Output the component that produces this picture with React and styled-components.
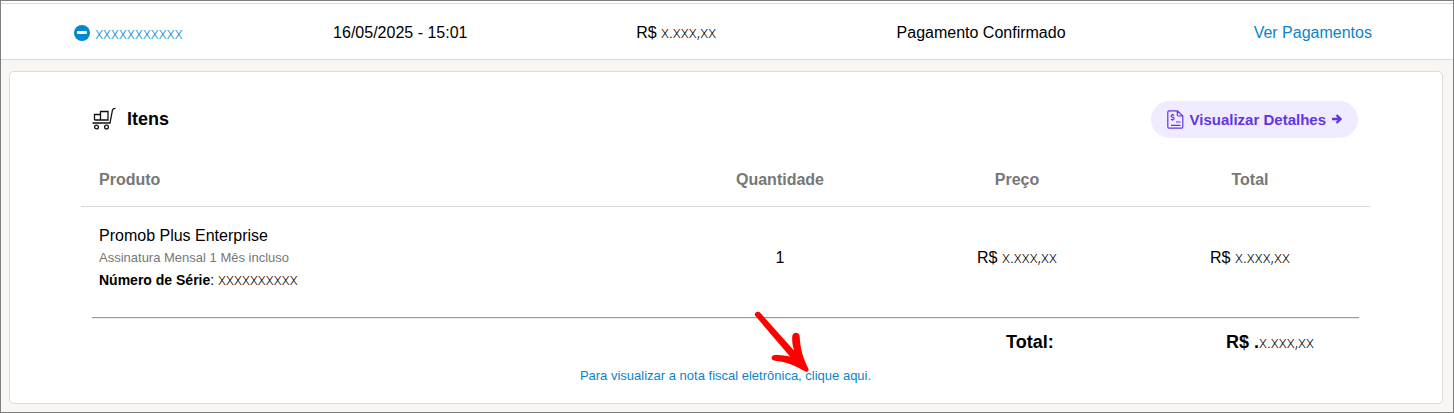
import React from "react";
import styled, { createGlobalStyle } from "styled-components";

const GlobalStyle = createGlobalStyle`
  *, *::before, *::after { box-sizing: border-box; }
  body {
    margin: 0;
    background: #f9f5f2;
    color: #000;
    font-family: "Liberation Sans", Arial, sans-serif;
    font-size: 16px;
    line-height: 22px;
  }
`;

const Page = styled.main`
  border: 1px solid #7f7f7f;
  padding-bottom: 8px;
`;

const OrderTable = styled.table`
  width: 100%;
  margin-bottom: 11px;
  table-layout: fixed;
  border-collapse: collapse;
  background: #fff;
`;

const OrderRow = styled.tr`
  border-bottom: 1px solid #dadada;
`;

const OrderSpacer = styled.div`
  height: 3px;
  background: #fff;
  border-bottom: 1px solid #dadada;
`;

const OrderCell = styled.td`
  width: ${(p) => p.$width};
  height: 55px;
  padding: 4px 0 0 ${(p) => p.$indent || "0"};
  text-align: center;
  white-space: nowrap;
`;

const Link = styled.a`
  color: #0b84cb;
  text-decoration: none;
`;

const OrderLink = styled(Link)`
  display: flex;
  align-items: center;
  justify-content: center;
  gap: 5px;
`;

const Masked = styled.span`
  font-family: "Open Sans", sans-serif;
  font-size: 16px;
  font-weight: 300;
  line-height: 16px;
`;

const Card = styled.section`
  margin: 0 10px 0 8px;
  padding: 29px 72px 16px 71px;
  background: #fff;
  border: 1px solid #dcdcdc;
  border-radius: 5px;
`;

const CardHeader = styled.header`
  display: flex;
  align-items: center;
  justify-content: space-between;
  padding: 0 12px 0 11px;
`;

const Title = styled.h2`
  display: flex;
  align-items: center;
  gap: 11px;
  margin: 0;
  font-size: 18px;
  font-weight: 700;
`;

const DetailsButton = styled.button`
  display: flex;
  align-items: center;
  gap: 6px;
  height: 37px;
  padding: 0 16px;
  border: 0;
  border-radius: 19px;
  background: #f0ebff;
  color: #5f37e2;
  font: 700 15px "Liberation Sans", Arial, sans-serif;
  cursor: pointer;
`;

const ItemsTable = styled.table`
  width: 100%;
  table-layout: fixed;
  border-collapse: collapse;
`;

const HeadCell = styled.th`
  width: ${(p) => p.$width || "auto"};
  height: 69px;
  padding: ${(p) => (p.$start ? "17px 0 0 18px" : "17px 0 0")};
  border-bottom: 1px solid #dadada;
  color: #777;
  font-weight: 700;
  text-align: ${(p) => (p.$start ? "left" : "center")};
`;

const ItemCell = styled.td`
  height: 110px;
  padding: ${(p) => (p.$start ? "0 0 8px 18px" : "0 0 8px")};
  text-align: ${(p) => (p.$start ? "left" : "center")};
`;

const ProductDetail = styled.div`
  color: ${(p) => (p.$muted ? "#777" : "#000")};
  font-size: ${(p) => (p.$muted ? "13px" : "14px")};
`;

const Rule = styled.hr`
  margin: 0 11px;
  border: 0;
  border-top: 1px solid #999;
  border-bottom: 1px solid #eee;
`;

const Summary = styled.dl`
  display: flex;
  justify-content: flex-end;
  align-items: baseline;
  margin: 12px 0;
  font-size: 18px;
  font-weight: 700;
`;

const SummaryLabel = styled.dt`
  width: 220px;
`;

const SummaryValue = styled.dd`
  width: 144px;
  margin: 0;
`;

const InvoiceNote = styled.p`
  margin: 0;
  font-size: 13px;
  text-align: center;
`;

const InvoiceLink = styled(Link)`
  position: relative;
`;

const Pointer = styled.svg`
  position: absolute;
  right: 61px;
  bottom: 10px;
  pointer-events: none;
`;

const MinusIcon = () => (
  <svg width="16" height="16" viewBox="0 0 16 16" aria-hidden="true">
    <circle cx="8" cy="8" r="8" fill="#0288d1" />
    <rect x="3" y="6" width="10" height="3" rx="1" fill="#fff" />
  </svg>
);

const CartIcon = () => (
  <svg width="24" height="24" viewBox="0 0 24 24" fill="none" stroke="#111" strokeWidth="1.3" aria-hidden="true">
    <path d="M2.500 13V7.500h6M8.500 13V4.500h7.500V13H2.500M.5 16h17.500L20.500 3q.4-1.700 3-1.700" />
    <circle cx="4.500" cy="20" r="1.900" />
    <circle cx="14.500" cy="20" r="1.900" />
  </svg>
);

const BillIcon = () => (
  <svg width="17" height="19" viewBox="0 0 17 19" fill="none" stroke="currentColor" strokeWidth="1.200" aria-hidden="true">
    <path d="M2 .8h8.500L15.800 6v11q0 1.200-1.200 1.200H2Q.8 18.200.8 17V2Q.8.800 2 .800zM10.300 1v3.800q0 1.200 1.200 1.200h4.200M9 12h4.500M4 15.300h9.500" />
    <path strokeWidth="1.2" d="M7.200 5.600Q5.500 4.400 4.400 5.300q-.8 1.300 1 1.900 2.300.5 1.500 1.900Q5.700 10.200 3.900 9.200M5.600 3.800v1M5.600 9.700v1" />
  </svg>
);

const ArrowIcon = () => (
  <svg width="10" height="10" viewBox="0 0 10 10" fill="none" stroke="currentColor" strokeWidth="2.300" aria-hidden="true">
    <path d="M0 5h8.300M4.500 1l4 4-4 4" />
  </svg>
);

const PointerArrow = () => (
  <Pointer width="56" height="62" viewBox="0 0 56 62" fill="#fe0000" aria-hidden="true">
    <path d="M1 4.500C0 1 4.500-.5 6.500 2L40 39.500C38.500 34 38 30 38.200 26c.2-5.500 7-5.500 7.500-.5.300 12 4 23 8.800 32.500.4 2-1 3.200-3 2.500C41 55 32 50.500 21 49.800c-4.500-.5-4.500-5.500 0-5.800 5-.3 10 .2 15 1.500z" />
  </Pointer>
);

const Price = () => (
  <>
    R$ <Masked>x.xxx,xx</Masked>
  </>
);

export default function App() {
  return (
    <>
      <GlobalStyle />
      <Page>
        <OrderSpacer />
        <OrderTable>
          <tbody>
            <OrderRow>
              <OrderCell $width="17%" $indent="8px">
                <OrderLink href="#pedido">
                  <MinusIcon />
                  <Masked>xxxxxxxxxxx</Masked>
                </OrderLink>
              </OrderCell>
              <OrderCell $width="21%">16/05/2025 - 15:01</OrderCell>
              <OrderCell $width="17%"><Price /></OrderCell>
              <OrderCell $width="25%">Pagamento Confirmado</OrderCell>
              <OrderCell $width="20%" $indent="10px">
                <Link href="#pagamentos">Ver Pagamentos</Link>
              </OrderCell>
            </OrderRow>
          </tbody>
        </OrderTable>

        <Card>
          <CardHeader>
            <Title><CartIcon />Itens</Title>
            <DetailsButton type="button">
              <BillIcon />Visualizar Detalhes<ArrowIcon />
            </DetailsButton>
          </CardHeader>

          <ItemsTable>
            <thead>
              <tr>
                <HeadCell $start scope="col">Produto</HeadCell>
                <HeadCell $width="248px" scope="col">Quantidade</HeadCell>
                <HeadCell $width="226px" scope="col">Preço</HeadCell>
                <HeadCell $width="240px" scope="col">Total</HeadCell>
              </tr>
            </thead>
            <tbody>
              <tr>
                <ItemCell $start>
                  <div>Promob Plus Enterprise</div>
                  <ProductDetail $muted>Assinatura Mensal 1 Mês incluso</ProductDetail>
                  <ProductDetail>
                    <strong>Número de Série</strong>: <Masked>xxxxxxxxxx</Masked>
                  </ProductDetail>
                </ItemCell>
                <ItemCell>1</ItemCell>
                <ItemCell><Price /></ItemCell>
                <ItemCell><Price /></ItemCell>
              </tr>
            </tbody>
          </ItemsTable>

          <Rule />
          <Summary>
            <SummaryLabel>Total:</SummaryLabel>
            <SummaryValue>R$ .<Masked>x.xxx,xx</Masked></SummaryValue>
          </Summary>
          <InvoiceNote>
            <InvoiceLink href="#nota-fiscal">
              Para visualizar a nota fiscal eletrônica, clique aqui.
              <PointerArrow />
            </InvoiceLink>
          </InvoiceNote>
        </Card>
      </Page>
    </>
  );
}
